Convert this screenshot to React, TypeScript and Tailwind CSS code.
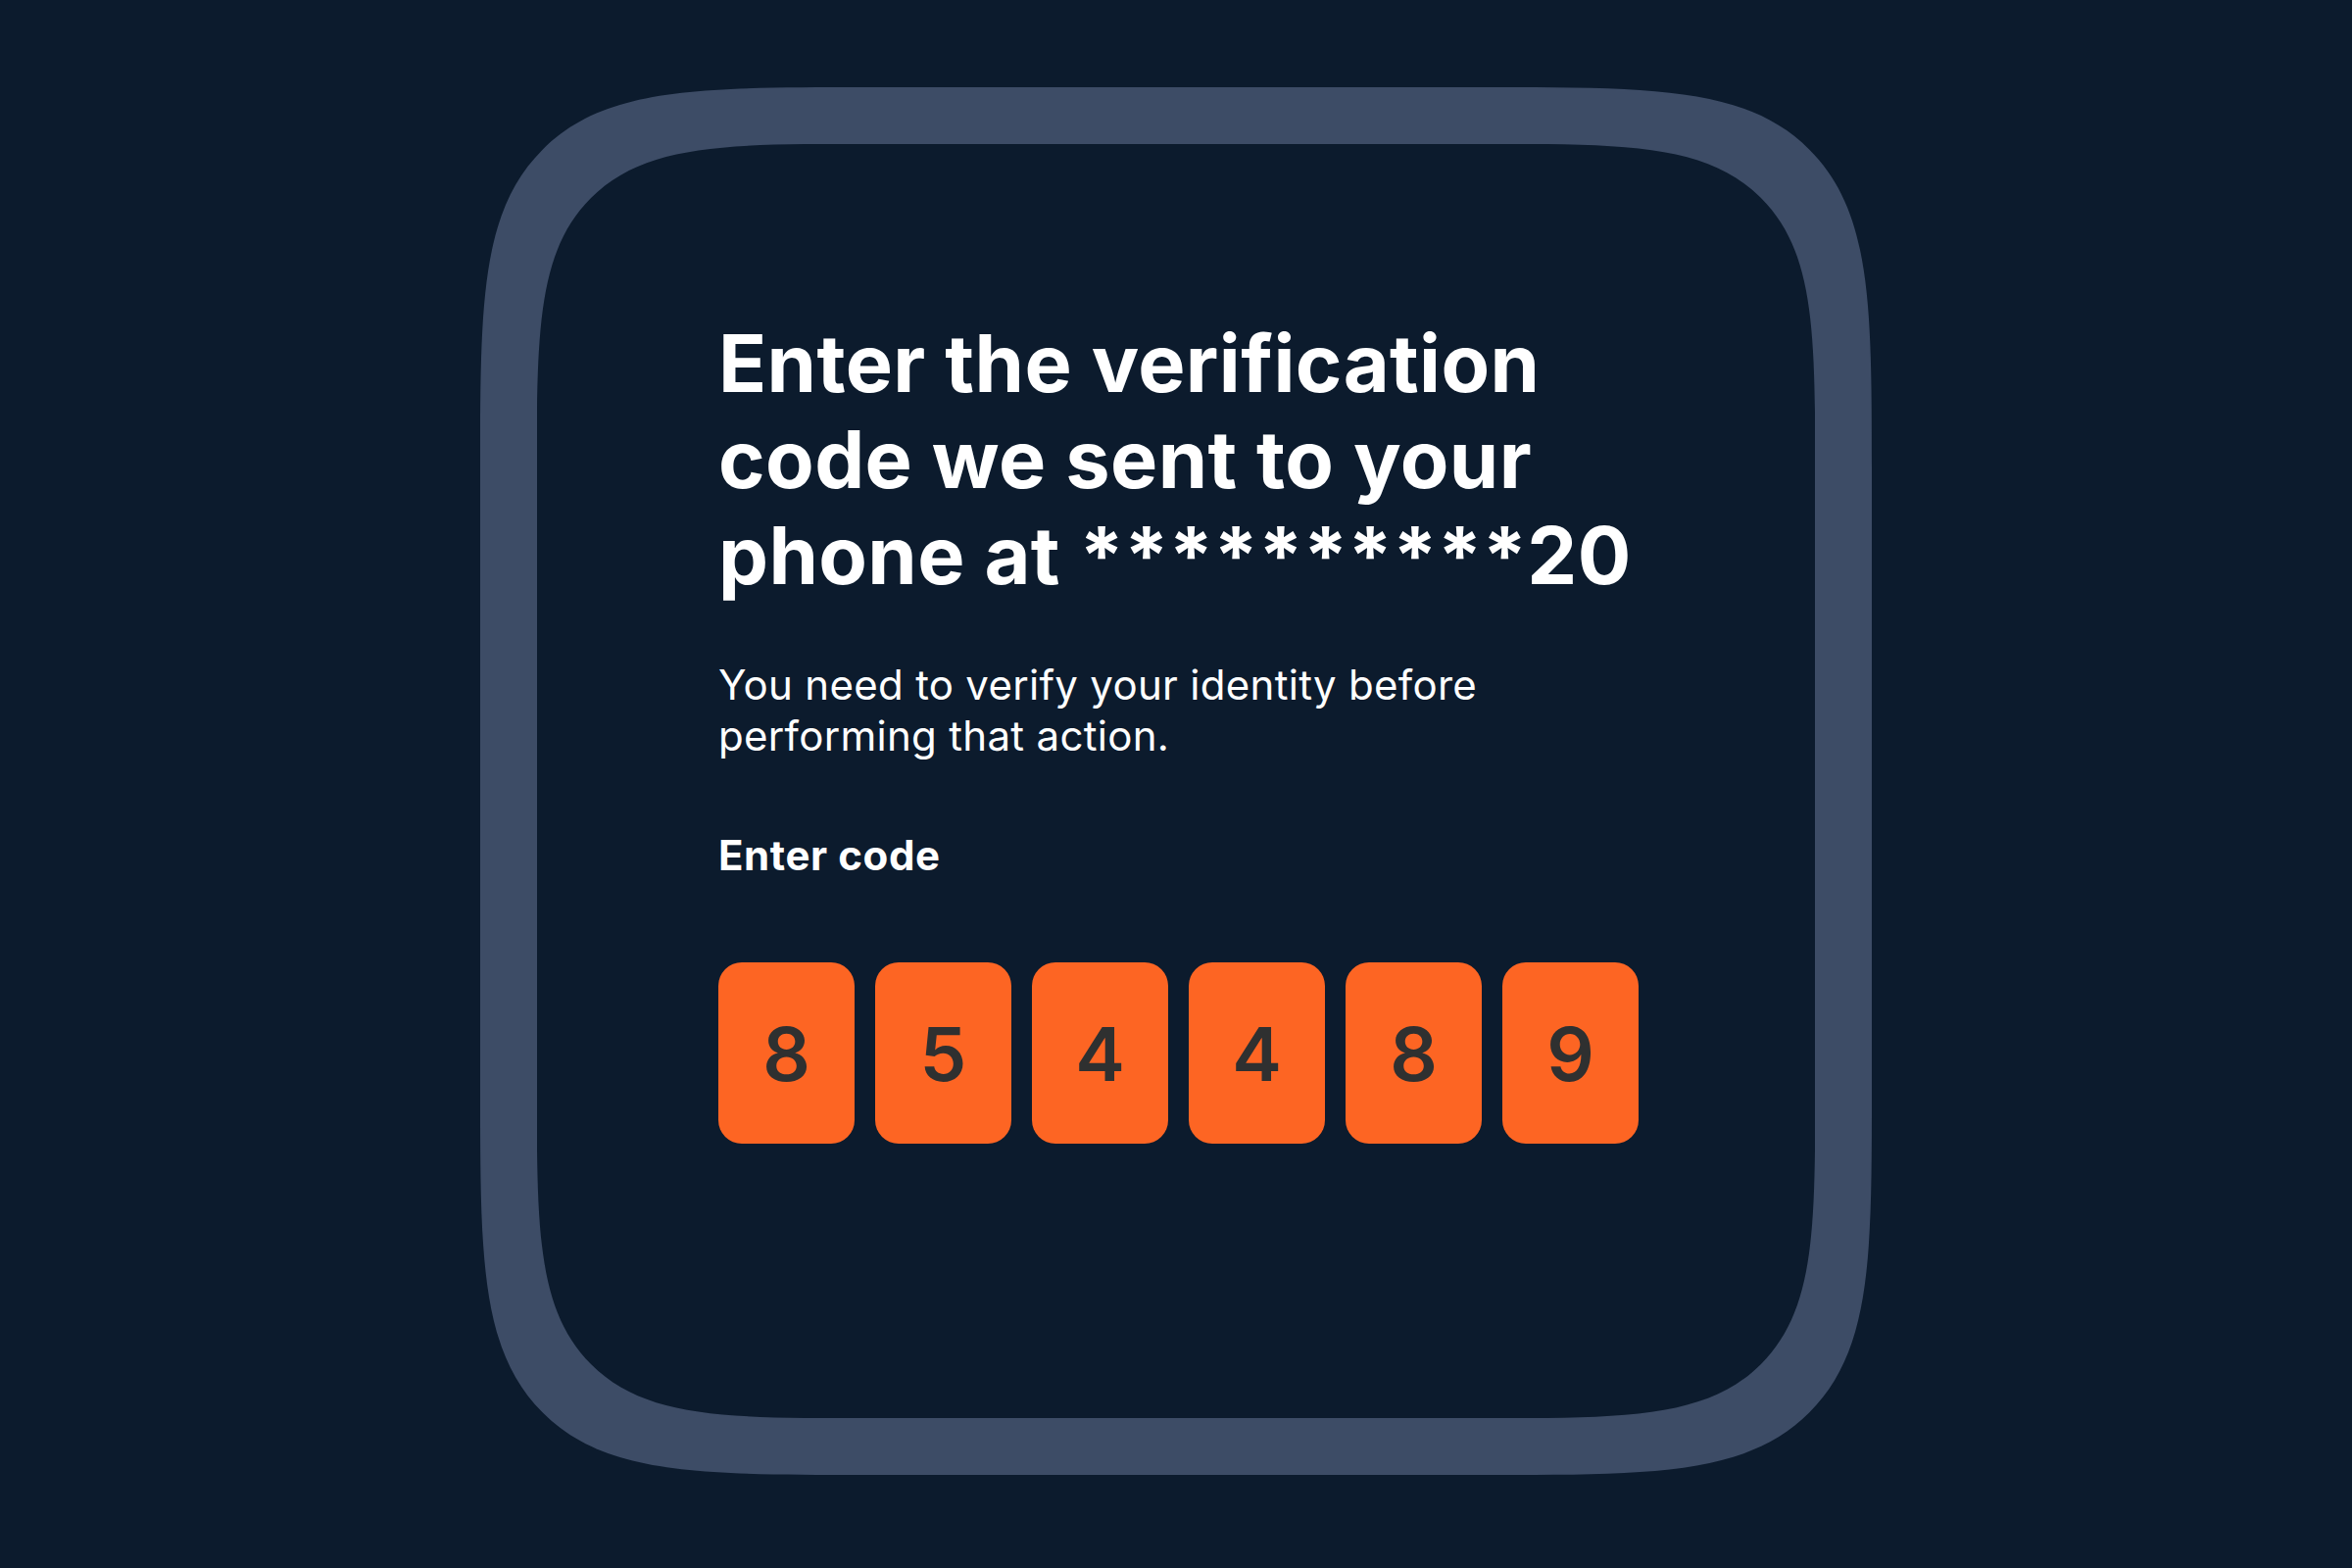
import React from "react";

const code = ["8", "5", "4", "4", "8", "9"];

function CodeCell({ digit }: { digit: string }) {
  return (
    <div className="flex h-[185px] w-[139px] items-center justify-center rounded-[24px] bg-[#fd6523] text-[76px] font-semibold leading-none text-[#2f3030]">
      {digit}
    </div>
  );
}

export default function App() {
  return (
    <div className="flex h-[1600px] w-full justify-center bg-[#0c1b2d] font-['Inter','Noto_Sans',sans-serif] text-white">
      <div className="mt-[89px] h-[1416px] w-[1420px] rounded-[215px] border-[58px] border-[#3d4c66] [corner-shape:squircle] supports-[corner-shape:squircle]:rounded-[400px]">
        <div className="flex flex-col pl-[185px] pt-[175px]">
          <h1 className="text-[81px] font-bold leading-[98px] tracking-[0.4px]">
            Enter the verification
            <br />
            code we sent to your
            <br />
            phone at **********20
          </h1>
          <p className="mt-[57px] text-[42px] font-normal leading-[52px] tracking-[0.3px]">
            You need to verify your identity before
            <br />
            performing that action.
          </p>
          <div className="mt-[70px] text-[42px] font-bold leading-[52px] tracking-[0.6px]">Enter code</div>
          <div className="mt-[83px] flex gap-[21px]">
            {code.map((d, i) => (
              <CodeCell key={i} digit={d} />
            ))}
          </div>
        </div>
      </div>
    </div>
  );
}
